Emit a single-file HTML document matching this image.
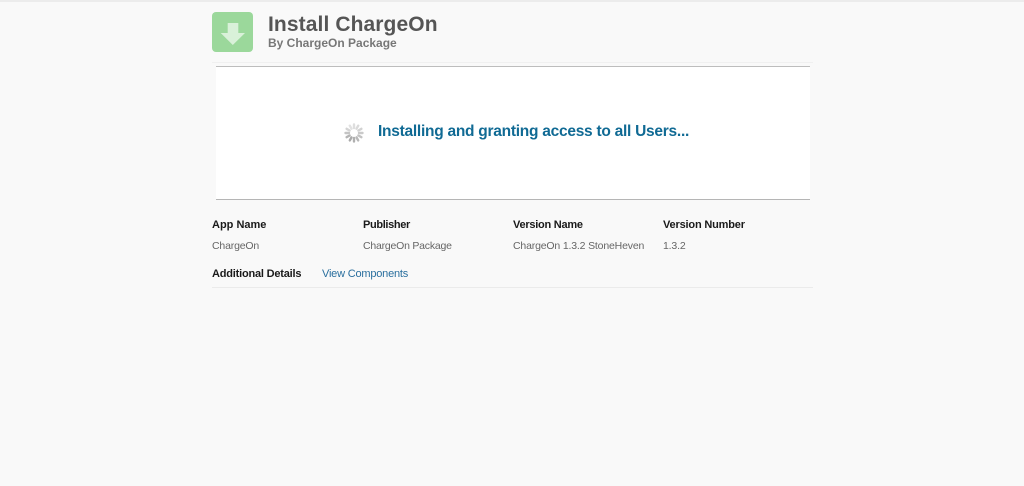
<!DOCTYPE html>
<html><head><meta charset="utf-8"><style>
html,body{margin:0;padding:0;width:1024px;height:486px;overflow:hidden;background:#f9f9f9}
body{position:relative;font-family:"Liberation Sans",sans-serif}
div,svg{position:absolute}
#w{left:0;top:0;width:1024px;height:486px;filter:blur(.35px)}
.t{white-space:nowrap;line-height:14px;font-size:11px}
.b{font-weight:700;color:#1a1a1a;top:218px;letter-spacing:-.2px}
.v{color:#666;top:239px;font-size:10.5px;letter-spacing:-.17px}
</style></head><body><div id="w">
<div style="left:0;top:0;width:1024px;height:2px;background:#ececec"></div>
<div style="left:212px;top:12px;width:41px;height:40px;border-radius:4px;background:#9bd89b"></div>
<svg style="left:212px;top:12px" width="41" height="40" viewBox="0 0 41 40"><path d="M15.7 11H26.3V21H33L20.8 33L8.7 21H15.7Z" fill="#d9f1d9"/></svg>
<div class="t" style="left:268px;top:12px;font-size:21px;line-height:26px;font-weight:700;color:#555;letter-spacing:.1px">Install ChargeOn</div>
<div class="t" style="left:268px;top:36px;font-size:12px;font-weight:700;color:#777">By ChargeOn Package</div>
<div style="left:212px;top:62px;width:601px;height:1px;background:#f0f0f0"></div>
<div style="left:216px;top:66px;width:594px;height:134px;background:#fff;border-top:1px solid #bdbdbd;border-bottom:1px solid #b5b5b5;box-sizing:border-box"></div>
<svg style="left:344px;top:123px" width="20" height="20" viewBox="0 0 20 20" stroke-width="2.4" stroke-linecap="round">
<path d="M10 1.5V5" stroke="#dedede"/><path d="M14.2 2.7L12.5 5.7" stroke="#dadada"/><path d="M17.4 5.8L14.4 7.5" stroke="#d2d2d2"/><path d="M18.5 10H15" stroke="#cacaca"/><path d="M17.4 14.2L14.4 12.5" stroke="#c2c2c2"/><path d="M14.2 17.4L12.5 14.4" stroke="#b8b8b8"/><path d="M10 18.5V15" stroke="#b0b0b0"/><path d="M5.8 17.4L7.5 14.4" stroke="#aaa"/><path d="M2.6 14.2L5.6 12.5" stroke="#b4b4b4"/><path d="M1.5 10H5" stroke="#c4c4c4"/><path d="M2.6 5.8L5.6 7.5" stroke="#d4d4d4"/><path d="M5.8 2.7L7.5 5.7" stroke="#e2e2e2"/>
</svg>
<div class="t" style="left:378px;top:123px;font-size:15.5px;line-height:18px;font-weight:700;color:#106a94;letter-spacing:-.26px">Installing and granting access to all Users...</div>
<div class="t b" style="left:212px;letter-spacing:0">App Name</div>
<div class="t b" style="left:363px;letter-spacing:-.35px">Publisher</div>
<div class="t b" style="left:513px;letter-spacing:-.25px">Version Name</div>
<div class="t b" style="left:663px;letter-spacing:-.18px">Version Number</div>
<div class="t v" style="left:212px">ChargeOn</div>
<div class="t v" style="left:363px;letter-spacing:-.22px">ChargeOn Package</div>
<div class="t v" style="left:513px">ChargeOn 1.3.2 StoneHeven</div>
<div class="t v" style="left:663px">1.3.2</div>
<div class="t b" style="left:212px;top:267px">Additional Details</div>
<div class="t" style="left:322px;top:267px;color:#2a6f9e;letter-spacing:-.2px">View Components</div>
<div style="left:212px;top:287px;width:601px;height:1px;background:#ebebeb"></div>
</div></body></html>
